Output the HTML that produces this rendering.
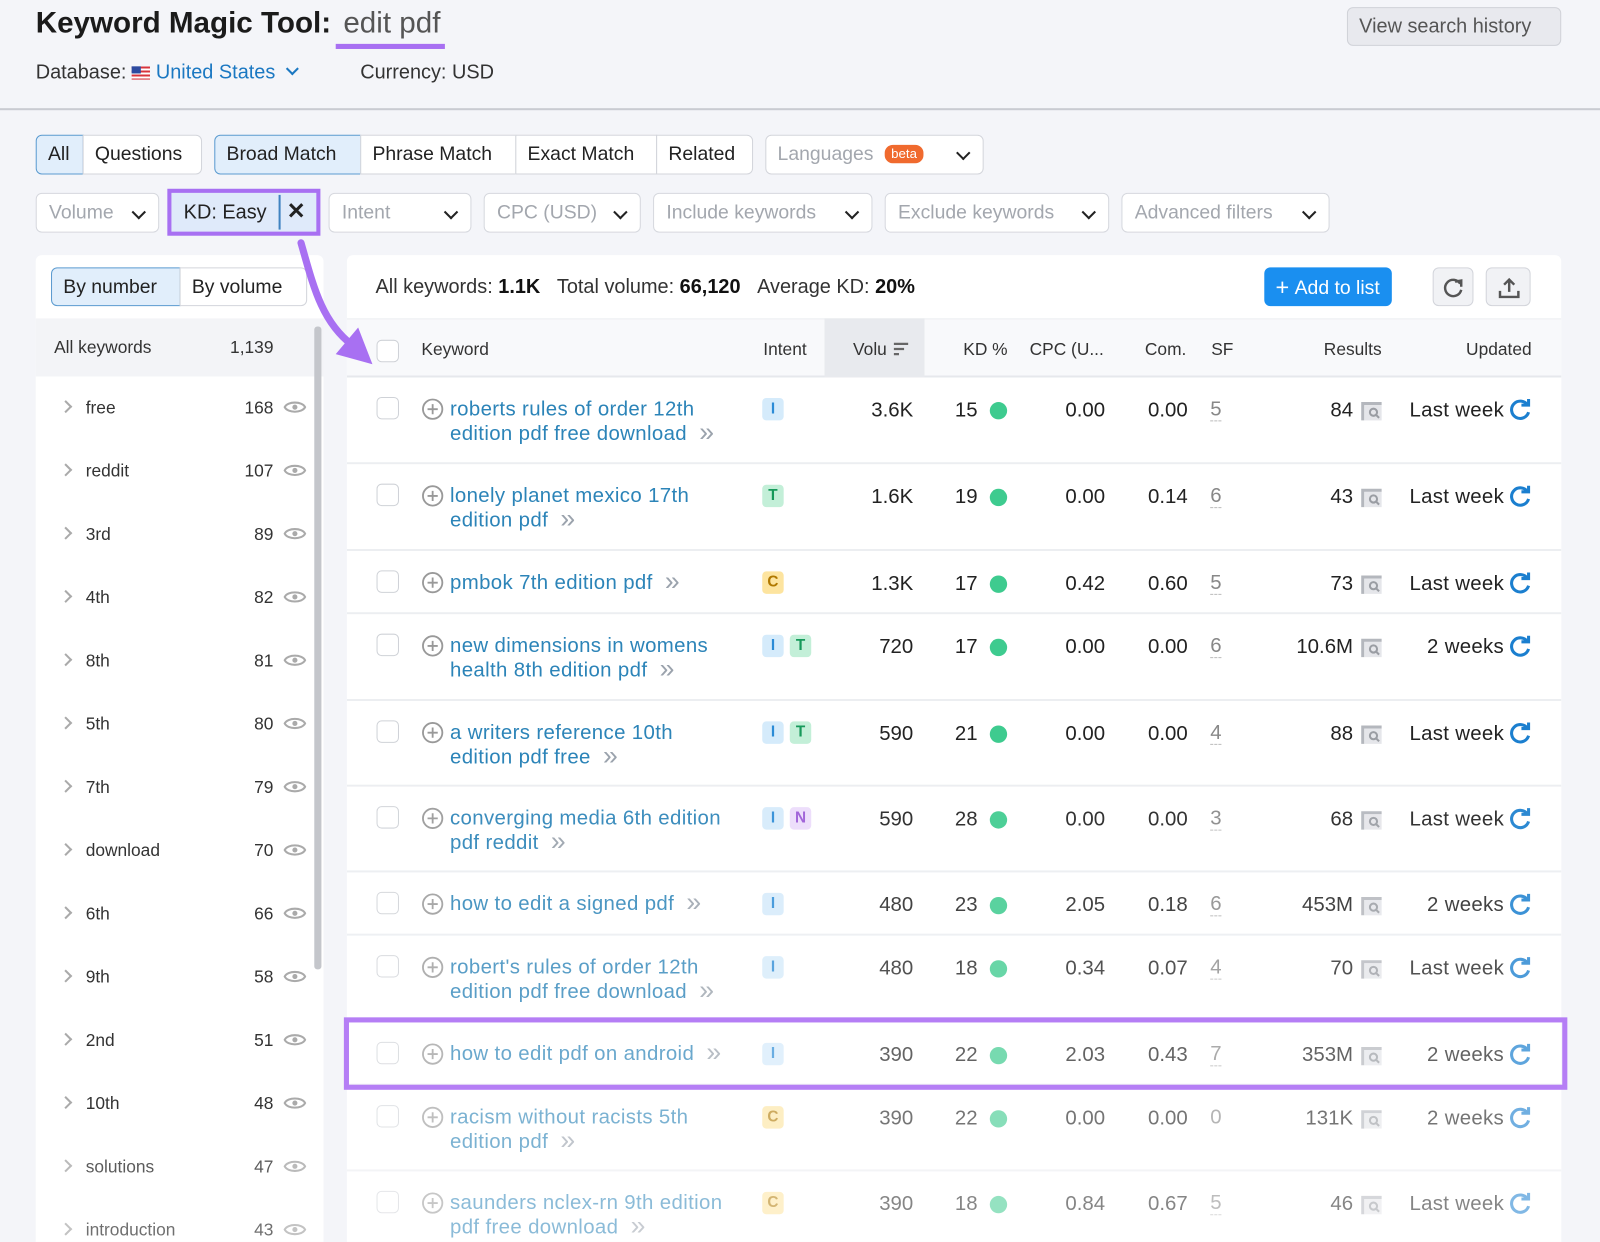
<!DOCTYPE html>
<html><head><meta charset="utf-8"><style>
*{box-sizing:border-box;margin:0;padding:0}
html,body{width:1600px;height:1242px;overflow:hidden;background:#f4f5f9}
#w{position:absolute;left:0;top:0;width:1568px;height:1217px;transform:scale(1.020408);transform-origin:0 0;font-family:"Liberation Sans",sans-serif;color:#222;overflow:hidden}
.a{position:absolute}
.btn{position:absolute;height:39px;border:1px solid #d3d5db;background:#fff;font-size:19px;line-height:37px;padding:0 11px;color:#222;white-space:nowrap}
.sel{background:#e1eefb;border-color:#5b9bd0}
.f{position:absolute;top:189px;height:39px;border:1px solid #d6d8de;border-radius:6px;background:#fff;font-size:19px;line-height:37px;padding-left:12px;color:#a3a7ae;white-space:nowrap}
.chev{position:absolute;right:14px;top:13px;width:10px;height:10px;border-right:2.5px solid #222;border-bottom:2.5px solid #222;transform:rotate(45deg)}
.side{font-size:17px;color:#333}
.si{position:absolute;left:0;width:282px;height:30px}
.si .c{position:absolute;left:25px;top:9px;width:9px;height:9px;border-right:2px solid #aaa;border-top:2px solid #aaa;transform:rotate(45deg)}
.si .n{position:absolute;left:49px;top:5px}
.si .k{position:absolute;left:150px;width:83px;text-align:right;top:5px}
.si svg{position:absolute;left:242px;top:5px}
.row{position:absolute;left:340px;width:1190px;border-bottom:2px solid #eceef1;background:#fff;font-size:20px}
.row>*{position:absolute}
.cb{left:29px;top:19px;width:22px;height:22px;border:1.5px solid #cfd2d7;border-radius:5px;background:#fff}
.pl{left:73px;top:20px}
.kw{left:101px;top:19px;width:310px;line-height:24px;color:#2c84b8;letter-spacing:.35px}
.kw i{font-style:normal;color:#9ba3ad;margin-left:12px;font-size:26px;line-height:20px;vertical-align:-1px;letter-spacing:0}
.bd{top:20px;height:22px;width:21px;border-radius:4px;font-size:15px;font-weight:bold;text-align:center;line-height:22px}
.I{background:#d5ebfb;color:#2b8bd6}.T{background:#c3efd8;color:#16995a}.C{background:#fde49f;color:#b07800}.N{background:#ecdcfb;color:#9b59d6}
.v{left:455px;width:100px;text-align:right;top:21px}
.kd{left:578px;width:40px;text-align:right;top:21px}
.dot{left:630px;top:24px;width:17px;height:17px;border-radius:50%;background:#3ecb8f}
.cpc{left:683px;width:60px;text-align:right;top:21px}
.com{left:764px;width:60px;text-align:right;top:21px}
.sf{left:846px;top:21px;color:#888;border-bottom:1.5px dashed #bbb;line-height:21px}
.res{left:886px;width:100px;text-align:right;top:21px}
.ri{left:992px;top:22px}
.up{left:1012px;width:122px;text-align:right;top:21px;letter-spacing:.3px}
.rf{left:1139px;top:19px}
.hd{position:absolute;top:333px;font-size:17px;color:#333}
</style></head><body><div id="w">

<div class="a" style="left:35px;top:7px;font-size:29px;font-weight:bold;color:#1b1b1b">Keyword Magic Tool:<span style="font-weight:normal;color:#555;margin-left:12px">edit pdf</span></div>
<div class="a" style="left:329px;top:43px;width:107px;height:5px;background:#a870f2"></div>
<div class="a" style="left:35px;top:60px;font-size:19.5px;color:#333">Database: <span style="display:inline-block;width:18px;height:13px;background:repeating-linear-gradient(#d8343d 0 2px,#fff 2px 4px);position:relative;vertical-align:-1px"><span style="position:absolute;left:0;top:0;width:9px;height:7px;background:#2d4aa0"></span></span> <span style="color:#1b78c2">United States</span><span style="display:inline-block;width:9px;height:9px;border-right:2.5px solid #1b78c2;border-bottom:2.5px solid #1b78c2;transform:rotate(45deg);margin-left:12px;vertical-align:5px"></span></div>
<div class="a" style="left:353px;top:60px;font-size:19.5px;color:#333">Currency: USD</div>
<div class="btn" style="left:1320px;top:7px;height:38px;width:210px;border-radius:6px;background:#e8e9ee;border-color:#d0d2d8;color:#555;font-size:19.5px">View search history</div>
<div class="a" style="left:0;top:106px;width:1568px;height:2px;background:#c9cbd2"></div>

<div class="btn sel" style="left:35px;top:132px;width:47px;border-radius:6px 0 0 6px">All</div>
<div class="btn" style="left:81px;top:132px;width:117px;border-radius:0 6px 6px 0">Questions</div>
<div class="btn sel" style="left:210px;top:132px;width:144px;border-radius:6px 0 0 6px">Broad Match</div>
<div class="btn" style="left:353px;top:132px;width:153px">Phrase Match</div>
<div class="btn" style="left:505px;top:132px;width:139px">Exact Match</div>
<div class="btn" style="left:643px;top:132px;width:95px;border-radius:0 6px 6px 0">Related</div>
<div class="btn" style="left:750px;top:132px;width:214px;border-radius:6px;color:#a3a7ae">Languages <span style="display:inline-block;background:#f06a2e;color:#fff;font-size:13px;line-height:18px;padding:0 6px;border-radius:8px;vertical-align:2px;margin-left:6px">beta</span><span class="chev" style="top:12px"></span></div>

<div class="f" style="left:35px;width:121px">Volume<span class="chev"></span></div>
<div class="a" style="left:164px;top:185px;width:150px;height:46px;border:4px solid #a870f2;background:#dfeafa"></div>
<div class="a" style="left:180px;top:197px;font-size:19.5px;color:#222">KD: Easy</div>
<div class="a" style="left:273px;top:191px;width:2px;height:34px;background:#3f83c1"></div>
<div class="a" style="left:281px;top:194px;font-size:22px;font-weight:bold;color:#222">&#10005;</div>
<div class="f" style="left:322px;width:140px">Intent<span class="chev"></span></div>
<div class="f" style="left:474px;width:154px">CPC (USD)<span class="chev"></span></div>
<div class="f" style="left:640px;width:215px">Include keywords<span class="chev"></span></div>
<div class="f" style="left:867px;width:220px">Exclude keywords<span class="chev"></span></div>
<div class="f" style="left:1099px;width:204px">Advanced filters<span class="chev"></span></div>

<!-- sidebar -->
<div class="a" style="left:35px;top:250px;width:282px;height:980px;background:#fff;border-radius:6px"></div>
<div class="btn sel" style="left:50px;top:262px;width:127px;border-radius:6px 0 0 6px;height:38px">By number</div>
<div class="btn" style="left:176px;top:262px;width:125px;border-radius:0 6px 6px 0;height:38px">By volume</div>
<div class="a" style="left:35px;top:312px;width:282px;height:57px;background:#f3f4f7"></div>
<div class="a side" style="left:53px;top:331px">All keywords</div>
<div class="a side" style="left:200px;top:331px;width:68px;text-align:right">1,139</div>
<div class="a" style="left:308px;top:320px;width:7px;height:630px;background:#c4c6cb;border-radius:3px"></div>
<div class="a side" style="left:35px;top:0">
<div class="si" style="top:385px"><span class="c"></span><span class="n">free</span><span class="k">168</span><svg width="24" height="18" viewBox="0 0 24 18"><path d="M2 9C5 3 19 3 22 9C19 15 5 15 2 9Z" fill="none" stroke="#aaa" stroke-width="2"/><circle cx="12" cy="9" r="2.5" fill="#aaa"/></svg></div>
<div class="si" style="top:447px"><span class="c"></span><span class="n">reddit</span><span class="k">107</span><svg width="24" height="18" viewBox="0 0 24 18"><path d="M2 9C5 3 19 3 22 9C19 15 5 15 2 9Z" fill="none" stroke="#aaa" stroke-width="2"/><circle cx="12" cy="9" r="2.5" fill="#aaa"/></svg></div>
<div class="si" style="top:509px"><span class="c"></span><span class="n">3rd</span><span class="k">89</span><svg width="24" height="18" viewBox="0 0 24 18"><path d="M2 9C5 3 19 3 22 9C19 15 5 15 2 9Z" fill="none" stroke="#aaa" stroke-width="2"/><circle cx="12" cy="9" r="2.5" fill="#aaa"/></svg></div>
<div class="si" style="top:571px"><span class="c"></span><span class="n">4th</span><span class="k">82</span><svg width="24" height="18" viewBox="0 0 24 18"><path d="M2 9C5 3 19 3 22 9C19 15 5 15 2 9Z" fill="none" stroke="#aaa" stroke-width="2"/><circle cx="12" cy="9" r="2.5" fill="#aaa"/></svg></div>
<div class="si" style="top:633px"><span class="c"></span><span class="n">8th</span><span class="k">81</span><svg width="24" height="18" viewBox="0 0 24 18"><path d="M2 9C5 3 19 3 22 9C19 15 5 15 2 9Z" fill="none" stroke="#aaa" stroke-width="2"/><circle cx="12" cy="9" r="2.5" fill="#aaa"/></svg></div>
<div class="si" style="top:695px"><span class="c"></span><span class="n">5th</span><span class="k">80</span><svg width="24" height="18" viewBox="0 0 24 18"><path d="M2 9C5 3 19 3 22 9C19 15 5 15 2 9Z" fill="none" stroke="#aaa" stroke-width="2"/><circle cx="12" cy="9" r="2.5" fill="#aaa"/></svg></div>
<div class="si" style="top:757px"><span class="c"></span><span class="n">7th</span><span class="k">79</span><svg width="24" height="18" viewBox="0 0 24 18"><path d="M2 9C5 3 19 3 22 9C19 15 5 15 2 9Z" fill="none" stroke="#aaa" stroke-width="2"/><circle cx="12" cy="9" r="2.5" fill="#aaa"/></svg></div>
<div class="si" style="top:819px"><span class="c"></span><span class="n">download</span><span class="k">70</span><svg width="24" height="18" viewBox="0 0 24 18"><path d="M2 9C5 3 19 3 22 9C19 15 5 15 2 9Z" fill="none" stroke="#aaa" stroke-width="2"/><circle cx="12" cy="9" r="2.5" fill="#aaa"/></svg></div>
<div class="si" style="top:881px"><span class="c"></span><span class="n">6th</span><span class="k">66</span><svg width="24" height="18" viewBox="0 0 24 18"><path d="M2 9C5 3 19 3 22 9C19 15 5 15 2 9Z" fill="none" stroke="#aaa" stroke-width="2"/><circle cx="12" cy="9" r="2.5" fill="#aaa"/></svg></div>
<div class="si" style="top:943px"><span class="c"></span><span class="n">9th</span><span class="k">58</span><svg width="24" height="18" viewBox="0 0 24 18"><path d="M2 9C5 3 19 3 22 9C19 15 5 15 2 9Z" fill="none" stroke="#aaa" stroke-width="2"/><circle cx="12" cy="9" r="2.5" fill="#aaa"/></svg></div>
<div class="si" style="top:1005px"><span class="c"></span><span class="n">2nd</span><span class="k">51</span><svg width="24" height="18" viewBox="0 0 24 18"><path d="M2 9C5 3 19 3 22 9C19 15 5 15 2 9Z" fill="none" stroke="#aaa" stroke-width="2"/><circle cx="12" cy="9" r="2.5" fill="#aaa"/></svg></div>
<div class="si" style="top:1067px"><span class="c"></span><span class="n">10th</span><span class="k">48</span><svg width="24" height="18" viewBox="0 0 24 18"><path d="M2 9C5 3 19 3 22 9C19 15 5 15 2 9Z" fill="none" stroke="#aaa" stroke-width="2"/><circle cx="12" cy="9" r="2.5" fill="#aaa"/></svg></div>
<div class="si" style="top:1129px;opacity:.8"><span class="c"></span><span class="n">solutions</span><span class="k">47</span><svg width="24" height="18" viewBox="0 0 24 18"><path d="M2 9C5 3 19 3 22 9C19 15 5 15 2 9Z" fill="none" stroke="#aaa" stroke-width="2"/><circle cx="12" cy="9" r="2.5" fill="#aaa"/></svg></div>
<div class="si" style="top:1191px;opacity:.7"><span class="c"></span><span class="n">introduction</span><span class="k">43</span><svg width="24" height="18" viewBox="0 0 24 18"><path d="M2 9C5 3 19 3 22 9C19 15 5 15 2 9Z" fill="none" stroke="#aaa" stroke-width="2"/><circle cx="12" cy="9" r="2.5" fill="#aaa"/></svg></div>
</div>

<!-- main panel -->
<div class="a" style="left:340px;top:250px;width:1190px;height:980px;background:#fff;border-radius:6px"></div>
<div class="a" style="left:368px;top:270px;font-size:19.5px;color:#333">All keywords: <b style="color:#111">1.1K</b>&nbsp;&nbsp;&nbsp;Total volume: <b style="color:#111">66,120</b>&nbsp;&nbsp;&nbsp;Average KD: <b style="color:#111">20%</b></div>
<div class="a" style="left:1239px;top:262px;width:125px;height:38px;background:#1a8ff0;border-radius:6px;color:#fff;font-size:19px;line-height:38px;padding-left:11px;white-space:nowrap;overflow:hidden"><span style="font-size:23px;vertical-align:-1px">+</span>&nbsp;Add to list</div>
<div class="a" style="left:1404px;top:262px;width:40px;height:38px;border:1px solid #d3d5db;border-radius:6px;background:#f1f2f5"><svg class="a" style="left:9px;top:8px" width="22" height="22" viewBox="0 0 22 22"><path d="M17 7A8 8 0 1 0 18 13" fill="none" stroke="#555" stroke-width="2.4"/><path d="M12 5L18 4L18 10" fill="none" stroke="#555" stroke-width="2.4"/></svg></div>
<div class="a" style="left:1456px;top:262px;width:44px;height:38px;border:1px solid #d3d5db;border-radius:6px;background:#f1f2f5"><svg class="a" style="left:10px;top:7px" width="24" height="24" viewBox="0 0 24 24"><path d="M12 16V4M7 9l5-5 5 5M3 15v6h18v-6" fill="none" stroke="#555" stroke-width="2.4"/></svg></div>
<div class="a" style="left:340px;top:312px;width:1190px;height:58px;background:#f8f9fb;border-top:1px solid #eceef1;border-bottom:2px solid #e6e8ec"></div>
<div class="a" style="left:808px;top:312px;width:98px;height:58px;background:#e8eaee"></div>
<div class="a cb" style="left:369px;top:333px;width:22px;height:22px;border:1.5px solid #cfd2d7;border-radius:5px;background:#fff"></div>
<div class="hd" style="left:413px">Keyword</div>
<div class="hd" style="left:748px">Intent</div>
<div class="hd" style="left:836px">Volu</div>
<svg class="a" style="left:875px;top:334px" width="16" height="16" viewBox="0 0 16 16"><path d="M1 3h14M1 8h10M1 13h5" stroke="#666" stroke-width="2.2"/></svg>
<div class="hd" style="left:944px">KD %</div>
<div class="hd" style="left:1009px">CPC (U...</div>
<div class="hd" style="left:1122px">Com.</div>
<div class="hd" style="left:1187px">SF</div>
<div class="hd" style="left:1254px;width:100px;text-align:right">Results</div>
<div class="hd" style="left:1380px;width:121px;text-align:right">Updated</div>

<svg width="0" height="0" style="position:absolute"><defs>
<g id="plus"><circle cx="11" cy="11" r="9.5" fill="none" stroke="#999" stroke-width="1.8"/><path d="M11 6v10M6 11h10" stroke="#999" stroke-width="1.8"/></g>
<g id="ric"><path d="M2 2h20v3H5v15H2z" fill="#b4b7bd"/><rect x="5" y="5" width="17" height="15" fill="#e5e6ea"/><circle cx="14" cy="12" r="3.5" fill="none" stroke="#9a9da3" stroke-width="2"/><path d="M16.5 14.5l3 3" stroke="#9a9da3" stroke-width="2"/></g>
<g id="ref"><path d="M18 8A8.5 8.5 0 1 0 19 15" fill="none" stroke="#1b7fcf" stroke-width="3"/><path d="M12 5h7V-1" fill="none" stroke="#1b7fcf" stroke-width="3" transform="translate(0 3)"/></g>
</defs></svg>

<div class="row" style="top:370px;height:85px"><span class="cb"></span><svg class="pl" width="22" height="22"><use href="#plus"/></svg><div class="kw">roberts rules of order 12th<br>edition pdf free download<i>»</i></div><span class="bd I" style="left:407px">I</span><span class="v">3.6K</span><span class="kd">15</span><span class="dot"></span><span class="cpc">0.00</span><span class="com">0.00</span><span class="sf">5</span><span class="res">84</span><svg class="ri" width="24" height="22"><use href="#ric"/></svg><span class="up">Last week</span><svg class="rf" width="24" height="24"><use href="#ref"/></svg></div>

<div class="row" style="top:455px;height:85px"><span class="cb"></span><svg class="pl" width="22" height="22"><use href="#plus"/></svg><div class="kw">lonely planet mexico 17th<br>edition pdf<i>»</i></div><span class="bd T" style="left:407px">T</span><span class="v">1.6K</span><span class="kd">19</span><span class="dot"></span><span class="cpc">0.00</span><span class="com">0.14</span><span class="sf">6</span><span class="res">43</span><svg class="ri" width="24" height="22"><use href="#ric"/></svg><span class="up">Last week</span><svg class="rf" width="24" height="24"><use href="#ref"/></svg></div>

<div class="row" style="top:540px;height:62px"><span class="cb"></span><svg class="pl" width="22" height="22"><use href="#plus"/></svg><div class="kw">pmbok 7th edition pdf<i>»</i></div><span class="bd C" style="left:407px">C</span><span class="v">1.3K</span><span class="kd">17</span><span class="dot"></span><span class="cpc">0.42</span><span class="com">0.60</span><span class="sf">5</span><span class="res">73</span><svg class="ri" width="24" height="22"><use href="#ric"/></svg><span class="up">Last week</span><svg class="rf" width="24" height="24"><use href="#ref"/></svg></div>

<div class="row" style="top:602px;height:85px"><span class="cb"></span><svg class="pl" width="22" height="22"><use href="#plus"/></svg><div class="kw">new dimensions in womens<br>health 8th edition pdf<i>»</i></div><span class="bd I" style="left:407px">I</span><span class="bd T" style="left:434px">T</span><span class="v">720</span><span class="kd">17</span><span class="dot"></span><span class="cpc">0.00</span><span class="com">0.00</span><span class="sf">6</span><span class="res">10.6M</span><svg class="ri" width="24" height="22"><use href="#ric"/></svg><span class="up">2 weeks</span><svg class="rf" width="24" height="24"><use href="#ref"/></svg></div>

<div class="row" style="top:687px;height:84px"><span class="cb"></span><svg class="pl" width="22" height="22"><use href="#plus"/></svg><div class="kw">a writers reference 10th<br>edition pdf free<i>»</i></div><span class="bd I" style="left:407px">I</span><span class="bd T" style="left:434px">T</span><span class="v">590</span><span class="kd">21</span><span class="dot"></span><span class="cpc">0.00</span><span class="com">0.00</span><span class="sf">4</span><span class="res">88</span><svg class="ri" width="24" height="22"><use href="#ric"/></svg><span class="up">Last week</span><svg class="rf" width="24" height="24"><use href="#ref"/></svg></div>

<div class="row" style="top:771px;height:84px;opacity:.92"><span class="cb"></span><svg class="pl" width="22" height="22"><use href="#plus"/></svg><div class="kw">converging media 6th edition<br>pdf reddit<i>»</i></div><span class="bd I" style="left:407px">I</span><span class="bd N" style="left:434px">N</span><span class="v">590</span><span class="kd">28</span><span class="dot"></span><span class="cpc">0.00</span><span class="com">0.00</span><span class="sf">3</span><span class="res">68</span><svg class="ri" width="24" height="22"><use href="#ric"/></svg><span class="up">Last week</span><svg class="rf" width="24" height="24"><use href="#ref"/></svg></div>

<div class="row" style="top:855px;height:62px;opacity:.85"><span class="cb"></span><svg class="pl" width="22" height="22"><use href="#plus"/></svg><div class="kw">how to edit a signed pdf<i>»</i></div><span class="bd I" style="left:407px">I</span><span class="v">480</span><span class="kd">23</span><span class="dot"></span><span class="cpc">2.05</span><span class="com">0.18</span><span class="sf">6</span><span class="res">453M</span><svg class="ri" width="24" height="22"><use href="#ric"/></svg><span class="up">2 weeks</span><svg class="rf" width="24" height="24"><use href="#ref"/></svg></div>

<div class="row" style="top:917px;height:85px;opacity:.78"><span class="cb"></span><svg class="pl" width="22" height="22"><use href="#plus"/></svg><div class="kw">robert's rules of order 12th<br>edition pdf free download<i>»</i></div><span class="bd I" style="left:407px">I</span><span class="v">480</span><span class="kd">18</span><span class="dot"></span><span class="cpc">0.34</span><span class="com">0.07</span><span class="sf">4</span><span class="res">70</span><svg class="ri" width="24" height="22"><use href="#ric"/></svg><span class="up">Last week</span><svg class="rf" width="24" height="24"><use href="#ref"/></svg></div>

<div class="row" style="top:1002px;height:62px;opacity:.7"><span class="cb"></span><svg class="pl" width="22" height="22"><use href="#plus"/></svg><div class="kw">how to edit pdf on android<i>»</i></div><span class="bd I" style="left:407px">I</span><span class="v">390</span><span class="kd">22</span><span class="dot"></span><span class="cpc">2.03</span><span class="com">0.43</span><span class="sf">7</span><span class="res">353M</span><svg class="ri" width="24" height="22"><use href="#ric"/></svg><span class="up">2 weeks</span><svg class="rf" width="24" height="24"><use href="#ref"/></svg></div>

<div class="row" style="top:1064px;height:84px;opacity:.62"><span class="cb"></span><svg class="pl" width="22" height="22"><use href="#plus"/></svg><div class="kw">racism without racists 5th<br>edition pdf<i>»</i></div><span class="bd C" style="left:407px">C</span><span class="v">390</span><span class="kd">22</span><span class="dot"></span><span class="cpc">0.00</span><span class="com">0.00</span><span class="sf" style="border:none">0</span><span class="res">131K</span><svg class="ri" width="24" height="22"><use href="#ric"/></svg><span class="up">2 weeks</span><svg class="rf" width="24" height="24"><use href="#ref"/></svg></div>

<div class="row" style="top:1148px;height:84px;opacity:.55;border:none"><span class="cb"></span><svg class="pl" width="22" height="22"><use href="#plus"/></svg><div class="kw">saunders nclex-rn 9th edition<br>pdf free download<i>»</i></div><span class="bd C" style="left:407px">C</span><span class="v">390</span><span class="kd">18</span><span class="dot"></span><span class="cpc">0.84</span><span class="com">0.67</span><span class="sf">5</span><span class="res">46</span><svg class="ri" width="24" height="22"><use href="#ric"/></svg><span class="up">Last week</span><svg class="rf" width="24" height="24"><use href="#ref"/></svg></div>

<!-- highlight box -->
<div class="a" style="left:337px;top:997px;width:1199px;height:71px;border:5px solid #b57ef5"></div>

<!-- arrow -->
<svg class="a" style="left:285px;top:230px" width="100" height="140" viewBox="0 0 100 140"><path d="M10 8C22 50 30 85 60 108" fill="none" stroke="#a870f2" stroke-width="7" stroke-linecap="round"/><path d="M44 117L80 127L66 91Z" fill="#a870f2"/></svg>

</div></body></html>
